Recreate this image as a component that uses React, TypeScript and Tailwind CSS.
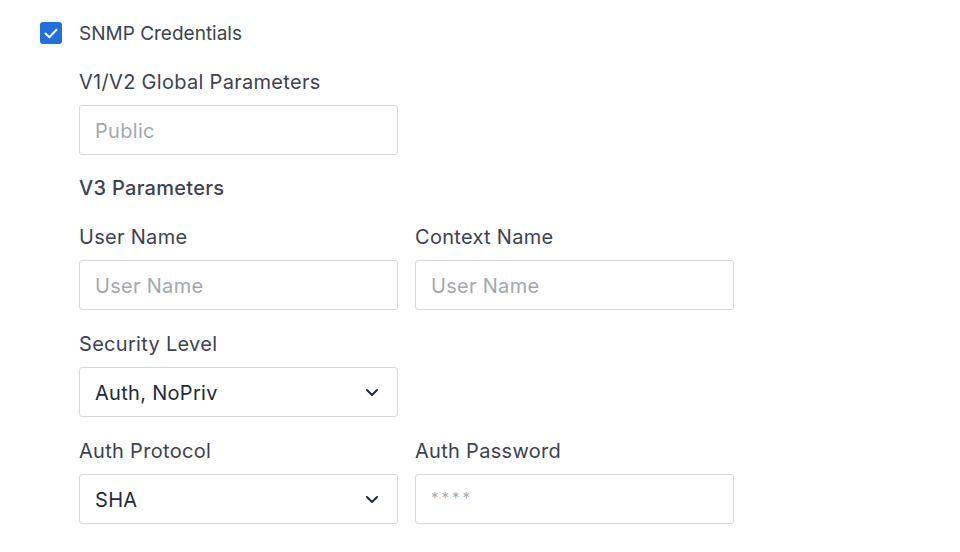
import React from "react";

const font = { fontFamily: "Inter, Roboto, 'Noto Sans', 'Liberation Sans', sans-serif" };

function Chevron() {
  return (
    <svg width="14" height="9" viewBox="0 0 14 9" fill="none" className="shrink-0">
      <path d="M2 2l5 5 5-5" stroke="#1f2d3d" strokeWidth="2" strokeLinecap="round" strokeLinejoin="round" />
    </svg>
  );
}

function Label({ children }: { children: React.ReactNode }) {
  return <div className="text-[20px] leading-[26px] tracking-[0.3px] text-[#3c4250] mb-[10px]">{children}</div>;
}

function Input({ placeholder, small }: { placeholder: string; small?: boolean }) {
  return (
    <div className="h-[50px] w-[319px] rounded-[3px] border border-[#d5d9de] bg-white flex items-center px-[15px]">
      <span
        className={
          small
            ? "text-[15px] text-[#a7abb2] tracking-[3px] -mt-[1px]"
            : "text-[20px] tracking-[0.3px] text-[#a4a8ae] pt-[2px]"
        }
      >
        {placeholder}
      </span>
    </div>
  );
}

function Select({ value }: { value: string }) {
  return (
    <div className="h-[50px] w-[319px] rounded-[3px] border border-[#d5d9de] bg-white flex items-center justify-between pl-[15px] pr-[18px]">
      <span className="text-[20px] tracking-[0.3px] text-[#222a36] pt-[2px]">{value}</span>
      <Chevron />
    </div>
  );
}

export default function App() {
  return (
    <div className="w-[960px] h-[552px] bg-white overflow-hidden" style={font}>
      <div className="pt-[22px] pl-[40px]">
        <div className="flex items-center gap-[17px] h-[22px]">
          <div className="w-[22px] h-[22px] rounded-[3px] bg-[#1f6fdc] flex items-center justify-center">
            <svg width="14" height="11" viewBox="0 0 14 11" fill="none">
              <path d="M1.5 5.5l3.8 3.8L12.5 1.8" stroke="white" strokeWidth="2" strokeLinecap="round" strokeLinejoin="round" />
            </svg>
          </div>
          <span className="text-[19px] leading-[24px] text-[#3c4250] pt-[2px]">SNMP Credentials</span>
        </div>
        <div className="pl-[39px] pt-[25px]">
          <Label>V1/V2 Global Parameters</Label>
          <Input placeholder="Public" />
          <div className="text-[20px] leading-[26px] tracking-[0.3px] text-[#3c4250] font-medium mt-[20px]">V3 Parameters</div>
          <div className="flex gap-[17px] mt-[23px]">
            <div>
              <Label>User Name</Label>
              <Input placeholder="User Name" />
            </div>
            <div>
              <Label>Context Name</Label>
              <Input placeholder="User Name" />
            </div>
          </div>
          <div className="mt-[21px]">
            <Label>Security Level</Label>
            <Select value="Auth, NoPriv" />
          </div>
          <div className="flex gap-[17px] mt-[21px]">
            <div>
              <Label>Auth Protocol</Label>
              <Select value="SHA" />
            </div>
            <div>
              <Label>Auth Password</Label>
              <Input placeholder="****" small />
            </div>
          </div>
        </div>
      </div>
    </div>
  );
}
